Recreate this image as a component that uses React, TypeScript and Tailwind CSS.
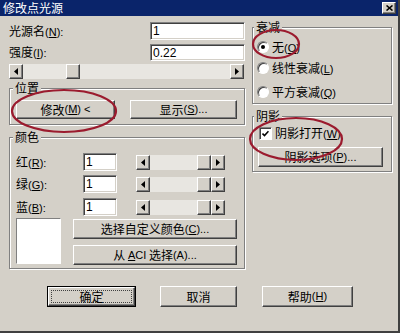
import clsx from "clsx";
import type { ReactNode } from "react";

// mnemonic, e.g. (N)
function M({ c, tail = "" }: { c: string; tail?: string }) {
    return (
        <span className="font-['Liberation_Sans',sans-serif] text-[11px]">
            (<span className="underline underline-offset-1">{c}</span>){tail}
        </span>
    );
}

function Btn({ children, className }: { children: ReactNode; className?: string }) {
    return (
        <div
            className={clsx(
                "flex items-center justify-center bg-[#d4d0c8] border border-t-white border-l-white border-r-[#404040] border-b-[#404040] shadow-[inset_-1px_-1px_0_#808080]",
                className
            )}
        >
            {children}
        </div>
    );
}

function Field({ value, className }: { value: string; className?: string }) {
    return (
        <div
            className={clsx(
                "flex items-center pl-[2px] bg-white border border-t-[#808080] border-l-[#808080] border-b-white border-r-white shadow-[inset_1px_1px_0_#404040,inset_-1px_-1px_0_#d4d0c8] font-['Liberation_Sans',sans-serif] text-[12px]",
                className
            )}
        >
            {value}
        </div>
    );
}

function Arrow({ dir }: { dir: "left" | "right" }) {
    return (
        <Btn className="w-[14px] h-full shrink-0">
            <svg width="4" height="7" viewBox="0 0 4 7">
                {dir === "left" ? <polygon points="4,0 4,7 0,3.5" fill="#000" /> : <polygon points="0,0 0,7 4,3.5" fill="#000" />}
            </svg>
        </Btn>
    );
}

function Scroll({ className, spacer }: { className?: string; spacer?: string }) {
    return (
        <div className={clsx("flex bg-[#e8e6e1]", className)}>
            <Arrow dir="left" />
            <div className="flex-1 flex">
                {spacer ? <div className={spacer} /> : <div className="flex-1" />}
                <Btn className="w-[14px] h-full" />
            </div>
            <Arrow dir="right" />
        </div>
    );
}

function Group({ title, className, children }: { title: string; className?: string; children: ReactNode }) {
    return (
        <fieldset
            className={clsx(
                "border border-[#808080] shadow-[inset_1px_1px_0_#fff,1px_1px_0_#fff]",
                className
            )}
        >
            <legend className="ml-[-3px] px-[2px] leading-[12px] bg-[#d4d0c8]">{title}</legend>
            {children}
        </fieldset>
    );
}

function Radio({ on }: { on?: boolean }) {
    return (
        <div className="w-[12px] h-[12px] rounded-full bg-white border border-t-[#808080] border-l-[#808080] border-b-white border-r-white shadow-[inset_1px_1px_0_#404040] flex items-center justify-center shrink-0">
            {on && <div className="w-[4px] h-[4px] rounded-full bg-black" />}
        </div>
    );
}

export default function App() {
    return (
        <div className="relative w-[400px] h-[333px] overflow-hidden bg-[#d4d0c8] border-r-2 border-b-2 border-r-[#404040] border-b-[#404040] flex flex-col text-[12px] text-black font-['Noto_Sans_CJK_SC',sans-serif]">
            {/* title bar */}
            <div className="h-[16px] shrink-0 bg-[#0a246a] flex items-center pl-[3px] pr-[2px] text-white">
                <span className="leading-none">修改点光源</span>
                <Btn className="ml-auto w-[14px] h-[12px]">
                    <svg width="7" height="6" viewBox="0 0 7 6">
                        <path d="M0.5 0.5 L6.5 5.5 M6.5 0.5 L0.5 5.5" stroke="#000" strokeWidth="1.6" />
                    </svg>
                </Btn>
            </div>

            <div className="flex pl-[9px]">
                {/* left column */}
                <div className="w-[236px] flex flex-col pt-[6px]">
                    <div className="flex items-center h-[18px]">
                        <span>光源名<M c="N" tail=":" /></span>
                        <Field value="1" className="ml-auto w-[95px] h-[18px]" />
                    </div>
                    <div className="flex items-center h-[17px] mt-[4px]">
                        <span>强度<M c="I" tail=":" /></span>
                        <Field value="0.22" className="ml-auto w-[95px] h-[17px]" />
                    </div>
                    <Scroll className="mt-[3px] h-[15px] w-[235px]" spacer="w-[43px]" />

                    <Group title="位置" className="mt-[3px] h-[43px] px-[6px]">
                        <div className="flex pt-[6px]">
                            <Btn className="w-[99px] h-[19px]">修改<M c="M" tail=" <" /></Btn>
                            <Btn className="w-[107px] h-[19px] ml-[15px]">显示<M c="S" tail="..." /></Btn>
                        </div>
                    </Group>

                    <Group title="颜色" className="mt-[6px] h-[138px] px-[6px]">
                        <div className="flex flex-col pt-[10px]">
                            {[
                                ["红", "R", "mt-0"],
                                ["绿", "G", "mt-[4px]"],
                                ["蓝", "B", "mt-[5px]"],
                            ].map(([l, k, m]) => (
                                <div key={k} className={clsx("flex items-center h-[18px]", m)}>
                                    <span className="w-[67px]">{l}<M c={k} tail=":" /></span>
                                    <Field value="1" className="w-[34px] h-[18px]" />
                                    <Scroll className="ml-[19px] w-[89px] h-[15px]" />
                                </div>
                            ))}
                            <div className="flex mt-[2px]">
                                <div className="w-[45px] h-[46px] bg-white border border-t-[#808080] border-l-[#808080] border-b-white border-r-white" />
                                <div className="ml-[12px] w-[164px] flex flex-col">
                                    <Btn className="mt-[1px] h-[20px]">选择自定义颜色<M c="C" tail="..." /></Btn>
                                    <Btn className="mt-[6px] h-[20px]">
                                        从&nbsp;<span className="font-['Liberation_Sans',sans-serif] text-[11px]"><span className="underline">A</span>CI</span>&nbsp;选择
                                        <span className="font-['Liberation_Sans',sans-serif] text-[11px]">(A)...</span>
                                    </Btn>
                                </div>
                            </div>
                        </div>
                    </Group>
                </div>

                {/* right column */}
                <div className="w-[140px] ml-[7px] flex flex-col pt-[5px]">
                    <Group title="衰减" className="h-[83px] px-[4px]">
                        <div className="flex flex-col pt-[7px]">
                            <div className="flex items-center h-[14px] gap-[3px]"><Radio on /><span>无<M c="O" /></span></div>
                            <div className="flex items-center h-[14px] gap-[3px] mt-[7px]"><Radio /><span>线性衰减<M c="L" /></span></div>
                            <div className="flex items-center h-[14px] gap-[3px] mt-[10px]"><Radio /><span>平方衰减<M c="Q" /></span></div>
                        </div>
                    </Group>
                    <Group title="阴影" className="mt-[6px] h-[62px] px-[4px]">
                        <div className="flex flex-col pt-[5px]">
                            <div className="flex items-center h-[13px] gap-[3px] ml-[2px]">
                                <div className="w-[13px] h-[13px] bg-white border border-t-[#808080] border-l-[#808080] border-b-white border-r-white shadow-[inset_1px_1px_0_#404040] flex items-center justify-center">
                                    <svg width="7" height="7" viewBox="0 0 7 7">
                                        <path d="M0.5 3.5 L2.5 5.5 L6.5 1.2" stroke="#000" strokeWidth="1.6" fill="none" />
                                    </svg>
                                </div>
                                <span>阴影打开<M c="W" /></span>
                            </div>
                            <Btn className="mt-[7px] ml-[1px] w-[125px] h-[20px]">阴影选项<M c="P" tail="..." /></Btn>
                        </div>
                    </Group>
                </div>
            </div>

            {/* bottom buttons */}
            <div className="flex mt-[17px] pl-[47px]">
                <div className="w-[89px] h-[21px] border border-black flex">
                    <Btn className="flex-1 p-[2px]">
                        <div className="w-full h-full border border-dotted border-[#404040] flex items-center justify-center">确定</div>
                    </Btn>
                </div>
                <Btn className="ml-[24px] w-[77px] h-[21px]">取消</Btn>
                <Btn className="ml-[25px] w-[91px] h-[21px]">帮助<M c="H" /></Btn>
            </div>

            {/* red annotation ellipses */}
            <svg className="absolute inset-0 pointer-events-none" width="400" height="333" viewBox="0 0 400 333">
                <g fill="none" stroke="#9b1b2e" strokeWidth="2.2">
                    <ellipse cx="276" cy="44" rx="23" ry="14" />
                    <ellipse cx="64" cy="111" rx="52" ry="21" />
                    <ellipse cx="296" cy="139" rx="46" ry="21" />
                </g>
            </svg>
        </div>
    );
}
